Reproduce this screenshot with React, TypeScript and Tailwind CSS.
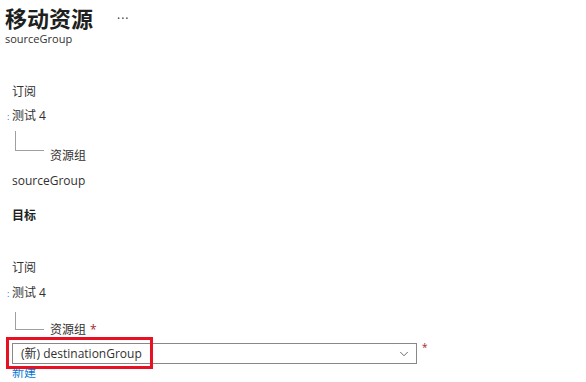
import { ChevronDown } from "lucide-react"

function TreeRow({ label, required, second }: { label: string; required?: boolean; second?: boolean }) {
  return (
    <div className="flex items-start">
      <div
        className={
          second
            ? "ml-[3px] mt-[10px] h-[18px] w-[29px] border-b border-l border-[#a19f9d]"
            : "ml-[3px] mt-[6px] h-[20px] w-[29px] border-b border-l border-[#a19f9d]"
        }
      />
      <span className={second ? "ml-[6px] mt-[20px] leading-[16px]" : "ml-[6px] mt-[23px] leading-[16px]"}>
        {label}
        {required && <span className="ml-[4px] text-[#a4262c]">*</span>}
      </span>
    </div>
  )
}

function Subscription({ gap }: { gap: string }) {
  return (
    <>
      <div className="leading-[18px]">订阅</div>
      <div className={`relative leading-[18px] ${gap}`}>
        <span className="absolute -left-[5px] top-[1px] text-[9px] text-[#0078d4]">:</span>
        测试 4
      </div>
    </>
  )
}

export default function App() {
  return (
    <div className="h-[382px] w-[586px] overflow-hidden bg-white font-['Segoe_UI','Open_Sans','Noto_Sans_CJK_SC',sans-serif] text-[12px] text-[#323130]">
      <div className="px-[5px] pt-[5px]">
        <div className="flex items-center">
          <h1 className="text-[22px] font-bold leading-[26px] text-[#201f1e]">移动资源</h1>
          <span className="ml-[24px] mt-[2px] text-[12px] tracking-[1px] text-[#323130]">···</span>
        </div>
        <div className="mt-[2px] text-[11px] leading-[12px]">sourceGroup</div>
      </div>

      <div className="px-[12px] pt-[38px]">
        <Subscription gap="mt-[6px]" />
        <TreeRow label="资源组" />
        <div className="mt-[8px] leading-[18px]">sourceGroup</div>
        <div className="mt-[17px] font-semibold leading-[18px] text-[#201f1e]">目标</div>

        <div className="mt-[34px]">
          <Subscription gap="mt-[7px]" />
          <TreeRow label="资源组" required second />
        </div>

        <div className="relative mt-[5px] flex items-start">
          <div className="flex h-[21px] w-[405px] items-center justify-between border border-[#8a8886] pl-[8px] pr-[5px]">
            <span className="leading-[18px]">(新) destinationGroup</span>
            <ChevronDown className="size-[14px] text-[#323130]" strokeWidth={1.2} />
          </div>
          <span className="ml-[5px] -mt-[3px] text-[10px] text-[#a4262c]">*</span>
          <div className="absolute -left-[6px] -top-[6px] h-[32px] w-[147px] border-[3px] border-[#e81123]" />
        </div>
        <div className="mt-[1px] leading-[16px] text-[#0078d4]">新建</div>
      </div>
    </div>
  )
}
